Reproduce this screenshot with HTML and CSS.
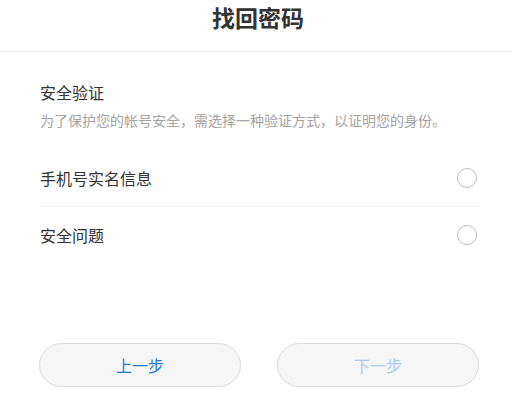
FILE: index.html
```html
<!DOCTYPE html>
<html lang="zh-CN">
<head>
<meta charset="utf-8">
<title>找回密码</title>
<link rel="stylesheet" href="styles.css">
</head>
<body>
<header class="header">
  <h1 class="title">找回密码</h1>
</header>
<main class="content">
  <section class="intro">
    <h2 class="intro-title">安全验证</h2>
    <p class="intro-desc">为了保护您的帐号安全，需选择一种验证方式，以证明您的身份。</p>
  </section>
  <ul class="options">
    <li class="option">
      <span class="option-label">手机号实名信息</span>
      <span class="radio"></span>
    </li>
    <li class="option">
      <span class="option-label">安全问题</span>
      <span class="radio"></span>
    </li>
  </ul>
  <div class="actions">
    <button class="btn btn-prev">上一步</button>
    <button class="btn btn-next" disabled>下一步</button>
  </div>
</main>
</body>
</html>
```
FILE: styles.css
```css
* { box-sizing: border-box; }
html, body { margin: 0; padding: 0; background: #fff; }
body {
  width: 512px;
  height: 406px;
  font-family: "Noto Sans CJK SC", "Noto Sans", sans-serif;
  color: #333;
}
.header {
  height: 52px;
  border-bottom: 1px solid #ececec;
  display: flex;
  justify-content: center;
  align-items: flex-start;
}
.title {
  margin: 0;
  font-size: 23px;
  font-weight: 700;
  line-height: 34px;
  color: #333;
  padding-left: 4px;
}
.content {
  padding: 0 32px 0 40px;
}
.intro {
  padding-top: 28px;
}
.intro-title {
  margin: 0;
  font-size: 16px;
  font-weight: 400;
  line-height: 24px;
  color: #333;
}
.intro-desc {
  margin: 6px 0 0;
  font-size: 14px;
  line-height: 20px;
  color: #a3a3a3;
}
.options {
  list-style: none;
  margin: 19px 0 0;
  padding: 0;
}
.option {
  height: 57px;
  display: flex;
  align-items: center;
  justify-content: space-between;
}
.option + .option {
  border-top: 1px solid #efefef;
}
.option-label {
  font-size: 16px;
  line-height: 24px;
  color: #333;
}
.radio {
  width: 20px;
  height: 20px;
  border: 1px solid #bdbdbd;
  border-radius: 50%;
  margin-right: 3px;
}
.actions {
  margin-top: 80px;
  display: flex;
  gap: 36px;
  margin-left: -1px;
}
.btn {
  width: 202px;
  height: 44px;
  border-radius: 22px;
  border: 1px solid #dcdcdc;
  background: #f6f6f6;
  font-family: "Noto Sans CJK SC", "Noto Sans", sans-serif;
  font-size: 16px;
  padding: 0;
}
.btn-prev { color: #1f7ad6; }
.btn-next { color: #a9cbee; }
```
